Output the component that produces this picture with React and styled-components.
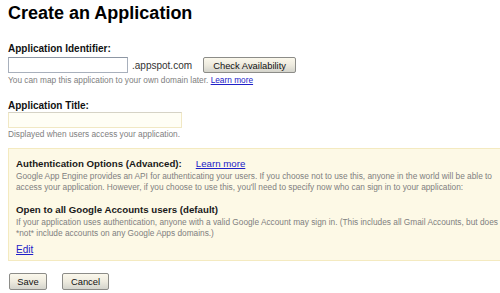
import React from 'react'
import styled, { createGlobalStyle } from 'styled-components'

const GlobalStyle = createGlobalStyle`
  html, body {
    margin: 0;
    padding: 0;
    background: #fff;
    overflow: hidden;
  }
  body {
    font-family: "Liberation Sans", Arial, sans-serif;
    color: #000;
  }
`

const Page = styled.div`
  width: 500px;
  height: 293px;
  overflow: hidden;
  padding-left: 8px;
  box-sizing: border-box;
`

const Title = styled.h1`
  margin: 0;
  padding-top: 2px;
  font-size: 18px;
  line-height: 22px;
  font-weight: bold;
`

const Field = styled.div`
  margin-top: ${p => p.$top}px;
`

const Label = styled.div`
  font-size: 10px;
  line-height: 12px;
  font-weight: bold;
  color: #111;
`

const Row = styled.div`
  display: flex;
  align-items: center;
  margin-top: ${p => p.$top || 0}px;
`

const Input = styled.input`
  box-sizing: border-box;
  width: ${p => p.$w}px;
  height: 16px;
  margin: 0;
  padding: 0 3px;
  border: 1px solid ${p => (p.$soft ? '#f1e8c4' : '#a8b0bc')};
  border-top-color: ${p => (p.$soft ? '#d6d3c6' : '#8d96a3')};
  background: ${p => (p.$soft ? '#fffef5' : '#fff')};
  font: 10px "Liberation Sans", Arial, sans-serif;
  outline: none;
`

const Suffix = styled.span`
  font-size: 10px;
  color: #333;
  margin: 0 11px 0 4px;
`

const Button = styled.button`
  box-sizing: border-box;
  width: ${p => p.$w}px;
  height: ${p => p.$h || 17}px;
  padding: 0;
  margin: 0;
  border: 1px solid #8c8c88;
  border-radius: 2px;
  background: linear-gradient(#fbf8ec 0%, #eeebdf 50%, #d4d4cc 100%);
  font: 9.4px "Liberation Sans", Arial, sans-serif;
  color: #111;
  text-align: center;
`

const Hint = styled.div`
  font-size: 8.3px;
  line-height: 10px;
  color: #808080;
  margin-top: ${p => p.$top || 2}px;
`

const Link = styled.a`
  color: #2020c8;
  text-decoration: underline;
  font-size: ${p => p.$size || 8.3}px;
  font-weight: normal;
`

const Notice = styled.div`
  box-sizing: border-box;
  width: 560px;
  margin-top: 9px;
  padding: 9px 7px 4px 7px;
  background: #fdf9e6;
  border: 1px solid #f4eac0;
`

const NoticeHead = styled.div`
  display: flex;
  align-items: baseline;
  gap: 14px;
  font-size: 9.7px;
  line-height: 11px;
  font-weight: bold;
  color: #1a1a1a;
  margin-top: ${p => p.$top || 0}px;
`

const Body = styled.p`
  margin: 2px 0 0 0;
  font-size: 8.3px;
  line-height: 11px;
  color: #808080;
  white-space: nowrap;
`

const EditRow = styled.div`
  margin-top: 3px;
  line-height: 12px;
`

const Actions = styled.div`
  display: flex;
  gap: 15px;
  margin-top: 12px;
  padding-left: 1px;
`

export default function App() {
  return (
    <Page>
      <GlobalStyle />
      <Title>Create an Application</Title>

      <Field $top={19}>
        <Label>Application Identifier:</Label>
        <Row $top={2}>
          <Input $w={120} />
          <Suffix>.appspot.com</Suffix>
          <Button $w={93} $h={16}>Check Availability</Button>
        </Row>
        <Hint>
          You can map this application to your own domain later.{' '}
          <Link href="#">Learn more</Link>
        </Hint>
      </Field>

      <Field $top={15}>
        <Label>Application Title:</Label>
        <Row>
          <Input $w={174} $soft />
        </Row>
        <Hint $top={1}>Displayed when users access your application.</Hint>
      </Field>

      <Notice>
        <NoticeHead>
          <span>Authentication Options (Advanced):</span>
          <Link href="#" $size={9.7}>Learn more</Link>
        </NoticeHead>
        <Body>
          Google App Engine provides an API for authenticating your users. If you choose not to use this, anyone in the world will be able to
          <br />
          access your application. However, if you choose to use this, you'll need to specify now who can sign in to your application:
        </Body>
        <NoticeHead $top={11}>
          <span>Open to all Google Accounts users (default)</span>
        </NoticeHead>
        <Body>
          If your application uses authentication, anyone with a valid Google Account may sign in. (This includes all Gmail Accounts, but does
          <br />
          *not* include accounts on any Google Apps domains.)
        </Body>
        <EditRow>
          <Link href="#" $size={10}>Edit</Link>
        </EditRow>
      </Notice>

      <Actions>
        <Button $w={38}>Save</Button>
        <Button $w={47}>Cancel</Button>
      </Actions>
    </Page>
  )
}
